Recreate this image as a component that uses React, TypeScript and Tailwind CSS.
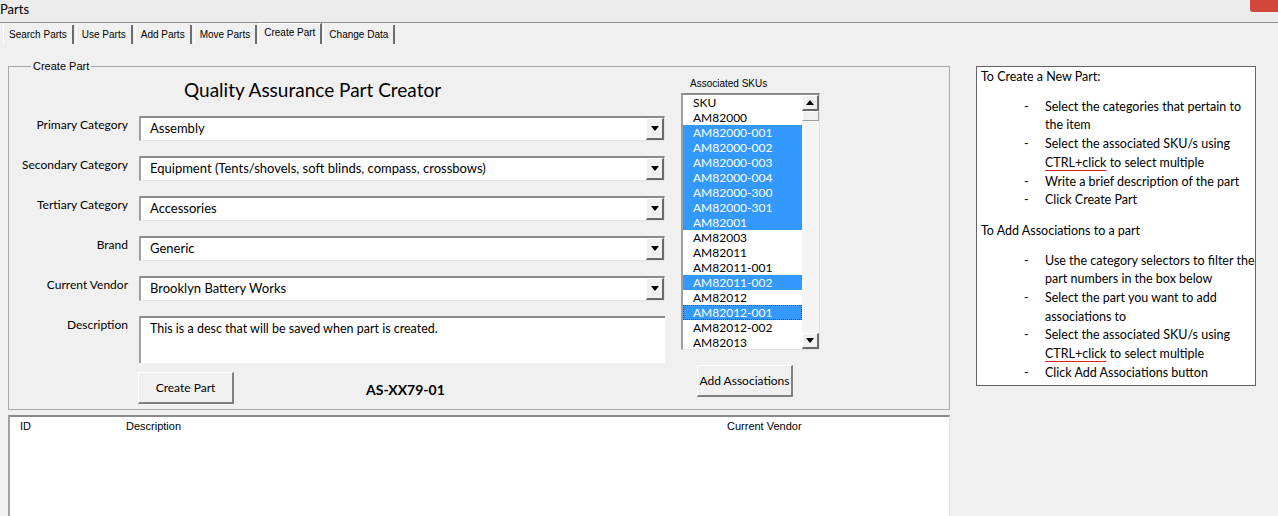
import React from 'react';

const ui = { fontFamily: 'Lato, "Liberation Sans", sans-serif' };
const tahoma = { fontFamily: '"Liberation Sans", "DejaVu Sans", sans-serif' };

const tabs = ['Search Parts', 'Use Parts', 'Add Parts', 'Move Parts', 'Create Part', 'Change Data'];

const combos = [
  { label: 'Primary Category', value: 'Assembly' },
  { label: 'Secondary Category', value: 'Equipment (Tents/shovels, soft blinds, compass, crossbows)' },
  { label: 'Tertiary Category', value: 'Accessories' },
  { label: 'Brand', value: 'Generic' },
  { label: 'Current Vendor', value: 'Brooklyn Battery Works' },
];

const skus: { id: string; sel?: boolean; focus?: boolean }[] = [
  { id: 'SKU' },
  { id: 'AM82000' },
  { id: 'AM82000-001', sel: true },
  { id: 'AM82000-002', sel: true },
  { id: 'AM82000-003', sel: true },
  { id: 'AM82000-004', sel: true },
  { id: 'AM82000-300', sel: true },
  { id: 'AM82000-301', sel: true },
  { id: 'AM82001', sel: true },
  { id: 'AM82003' },
  { id: 'AM82011' },
  { id: 'AM82011-001' },
  { id: 'AM82011-002', sel: true },
  { id: 'AM82012' },
  { id: 'AM82012-001', sel: true, focus: true },
  { id: 'AM82012-002' },
  { id: 'AM82013' },
];

function Arrow({ up }: { up?: boolean }) {
  return (
    <svg width="8" height="5" viewBox="0 0 8 5">
      <path d={up ? 'M0 5 L4 0 L8 5 Z' : 'M0 0 L8 0 L4 5 Z'} fill="#000" />
    </svg>
  );
}

function Combo({ value }: { value: string }) {
  return (
    <div className="flex h-[25px] w-[526px] items-center border-t-2 border-l-2 border-b border-r border-t-[#8a8a8a] border-l-[#a0a0a0] border-b-[#e3e3e3] border-r-[#e3e3e3] bg-white">
      <span className="flex-1 pl-[9px] text-[13px] text-black">{value}</span>
      <div className="flex h-[22px] w-[18px] items-center justify-center border-t border-l border-b-2 border-r-2 border-t-white border-l-white border-b-[#696969] border-r-[#696969] bg-[#f0f0f0]">
        <Arrow />
      </div>
    </div>
  );
}

function Button({ children, w }: { children: React.ReactNode; w: string }) {
  return (
    <div className={`flex h-[32px] ${w} items-center justify-center border-t border-l border-b-2 border-r-2 border-t-white border-l-white border-b-[#808080] border-r-[#808080] bg-[#f0f0f0] text-[12px] text-black`}>
      {children}
    </div>
  );
}

function Dash({ children }: { children: React.ReactNode }) {
  return (
    <div className="flex">
      <span className="w-[64px] pl-[43px]">-</span>
      <span className="flex-1">{children}</span>
    </div>
  );
}

function Ctrl() {
  return <span className="underline decoration-[#e02020] underline-offset-[3px]">CTRL+click</span>;
}

export default function App() {
  return (
    <div className="relative h-[516px] w-[1278px] overflow-hidden bg-[#f0f0f0] text-black" style={ui}>
      {/* title bar */}
      <div className="flex h-[23px] items-start border-b border-[#8c8c8c] bg-[#ececec]">
        <span className="text-[13px]">Parts</span>
        <div className="ml-auto h-[12px] w-[28px] rounded-bl-[3px] bg-[#d2473a]" />
      </div>

      {/* tabs */}
      <div className="flex h-[21px] items-end pl-[2px] pt-[1px]" style={tahoma}>
        {tabs.map((t) => {
          const active = t === 'Create Part';
          return (
            <div
              key={t}
              className={`flex items-center border-r-2 border-r-[#6d6d6d] border-l border-l-white px-[5px] text-[10px] ${
                active ? 'h-[21px] -mt-[2px] border-t border-t-white pb-[3px]' : 'h-[19px] mx-[1px]'
              }`}
            >
              {t}
            </div>
          );
        })}
      </div>

      <div className="flex pt-[16px]">
        {/* left column */}
        <div className="ml-[8px] flex w-[942px] flex-col">
          <fieldset className="h-[350px] border border-[#a8a8a8] pl-[12px]">
            <legend className="ml-[10px] px-[2px] text-[11px] leading-[12px]" style={tahoma}>
              Create Part
            </legend>
            <div className="flex">
              <div className="flex w-[648px] flex-col">
                <div className="flex h-[36px] items-center pl-[163px] pt-[1px] text-[19px]">Quality Assurance Part Creator</div>
                <div className="mt-[8px] flex flex-col">
                  {combos.map((c) => (
                    <div key={c.label} className="flex h-[40px]">
                      <div className="w-[107px] whitespace-nowrap text-right text-[12px]">{c.label}</div>
                      <div className="ml-[11px]">
                        <Combo value={c.value} />
                      </div>
                    </div>
                  ))}
                  <div className="flex">
                    <div className="w-[107px] text-right text-[12px]">Description</div>
                    <div className="ml-[11px] h-[47px] w-[526px] border-t-2 border-l-2 border-t-[#8a8a8a] border-l-[#a0a0a0] bg-white pl-[9px] pt-[2px] text-[12.5px]">
                      This is a desc that will be saved when part is created.
                    </div>
                  </div>
                  <div className="mt-[9px] flex items-end">
                    <div className="ml-[117px]">
                      <Button w="w-[96px]">Create Part</Button>
                    </div>
                    <div className="ml-[132px] pb-[4px] text-[14px] font-bold">AS-XX79-01</div>
                  </div>
                </div>
              </div>

              {/* SKU list */}
              <div className="flex flex-col">
                <div className="pl-[21px] pt-[6px] text-[10px] leading-[12px]" style={tahoma}>
                  Associated SKUs
                </div>
                <div className="mt-[3px] ml-[12px] flex h-[257px] w-[139px] border-t-2 border-l-2 border-t-[#8a8a8a] border-l-[#a0a0a0] border-r border-r-[#e3e3e3] border-b border-b-[#e3e3e3] bg-white">
                  <div className="flex w-[119px] flex-col">
                    {skus.map((s) => (
                      <div
                        key={s.id}
                        className={`flex h-[15px] items-center pl-[10px] text-[12px] ${
                          s.sel ? 'bg-[#3399ff] text-white' : ''
                        } ${s.focus ? 'outline-1 outline-dotted -outline-offset-1 outline-[#7a3a10]' : ''}`}
                      >
                        {s.id}
                      </div>
                    ))}
                  </div>
                  <div className="flex w-[17px] flex-col bg-[#f4f4f4]">
                    <div className="flex h-[16px] items-center justify-center border-t border-l border-b-2 border-r-2 border-t-white border-l-white border-b-[#696969] border-r-[#696969] bg-[#f0f0f0]">
                      <Arrow up />
                    </div>
                    <div className="h-[10px] border border-t-white border-l-white border-b-[#a0a0a0] border-r-[#a0a0a0] bg-[#f0f0f0]" />
                    <div className="flex-1" />
                    <div className="flex h-[16px] items-center justify-center border-t border-l border-b-2 border-r-2 border-t-white border-l-white border-b-[#696969] border-r-[#696969] bg-[#f0f0f0]">
                      <Arrow />
                    </div>
                  </div>
                </div>
                <div className="mt-[15px] ml-[28px]">
                  <Button w="w-[96px]">Add Associations</Button>
                </div>
              </div>
            </div>
          </fieldset>

          {/* results list */}
          <div className="mt-[5px] flex h-[110px] border-t-2 border-l-2 border-t-[#8a8a8a] border-l-[#a0a0a0] border-r border-r-[#e3e3e3] bg-white pt-[1px] text-[11px]" style={tahoma}>
            <span className="w-[116px] pl-[10px]">ID</span>
            <span className="w-[601px]">Description</span>
            <span>Current Vendor</span>
          </div>
        </div>

        {/* instructions */}
        <div className="ml-[26px] mt-[6px] h-[320px] w-[280px] border border-[#646464] bg-white pl-[4px] pt-[1px] text-[12.5px] leading-[18.7px]">
          <div>To Create a New Part:</div>
          <div className="mt-[11px]">
            <Dash>Select the categories that pertain to the item</Dash>
            <Dash>
              Select the associated SKU/s using <Ctrl /> to select multiple
            </Dash>
            <Dash>Write a brief description of the part</Dash>
            <Dash>Click Create Part</Dash>
          </div>
          <div className="mt-[12px]">To Add Associations to a part</div>
          <div className="mt-[11px]">
            <Dash>Use the category selectors to filter the part numbers in the box below</Dash>
            <Dash>Select the part you want to add associations to</Dash>
            <Dash>
              Select the associated SKU/s using <Ctrl /> to select multiple
            </Dash>
            <Dash>Click Add Associations button</Dash>
          </div>
        </div>
      </div>
    </div>
  );
}
